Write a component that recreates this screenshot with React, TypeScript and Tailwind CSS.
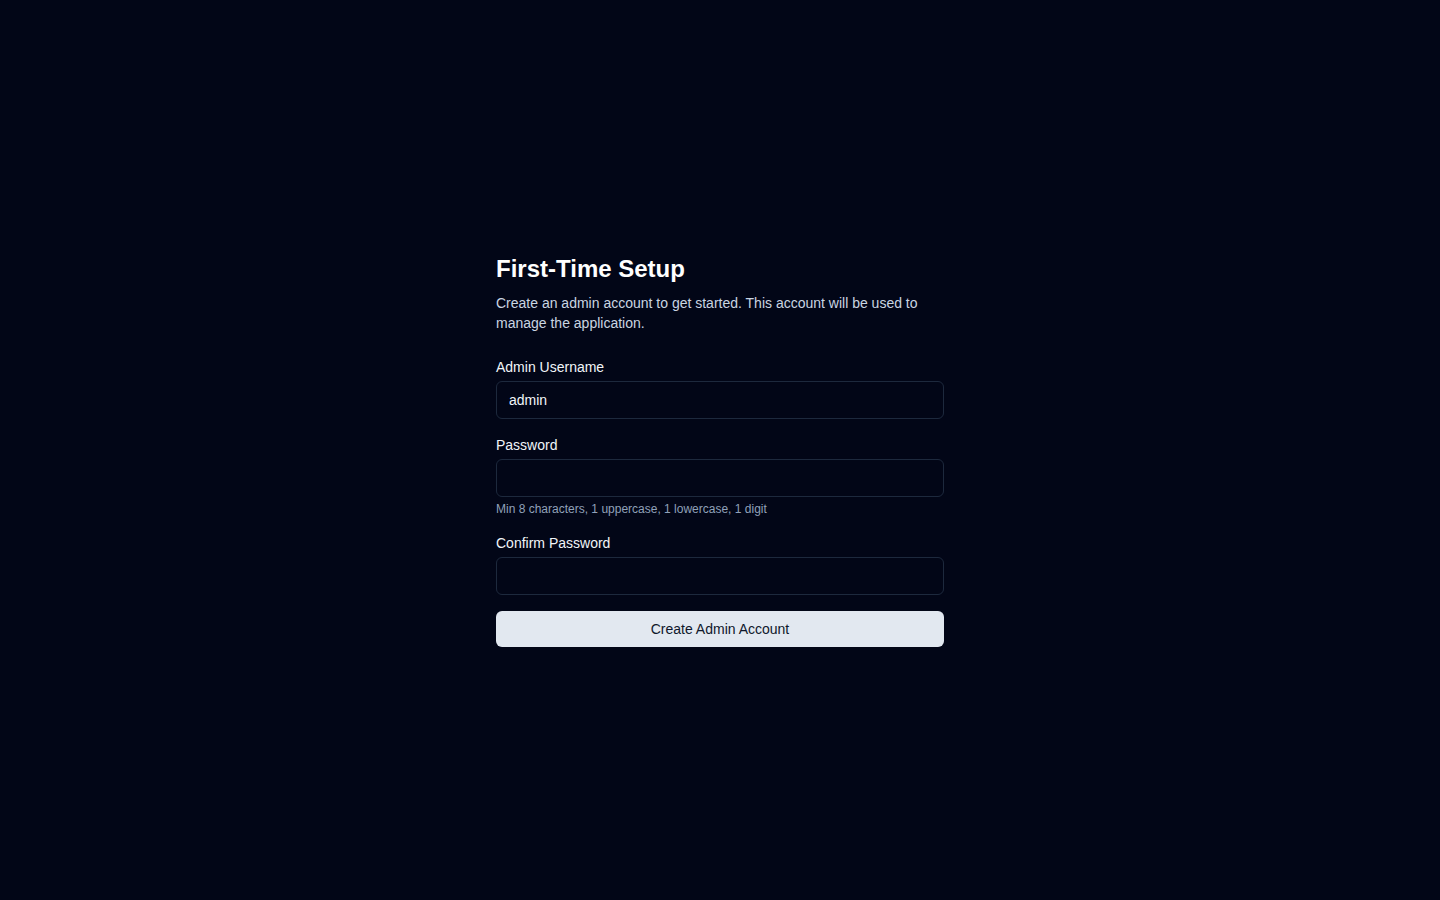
export default function App() {
  return (
    <div
      className="min-h-screen w-full bg-[#020617] flex items-center justify-center text-slate-100"
      style={{ fontFamily: '"Liberation Sans", Arial, sans-serif' }}
    >
      <div className="w-full max-w-md">
        <h1 className="text-2xl font-bold text-white">First-Time Setup</h1>
        <p className="mt-2 text-sm text-slate-300">
          Create an admin account to get started. This account will be used to manage the
          application.
        </p>

        <form className="mt-6 space-y-4" onSubmit={(e) => e.preventDefault()}>
          <div>
            <label className="block mb-1 text-sm text-slate-100">Admin Username</label>
            <input
              type="text"
              defaultValue="admin"
              className="w-full rounded-md border border-slate-800 bg-transparent px-3 py-2 text-sm text-slate-100 outline-none"
            />
          </div>
          <div>
            <label className="block mb-1 text-sm text-slate-100">Password</label>
            <input
              type="password"
              className="w-full rounded-md border border-slate-800 bg-transparent px-3 py-2 text-sm text-slate-100 outline-none"
            />
            <p className="mt-1 text-xs text-slate-400">
              Min 8 characters, 1 uppercase, 1 lowercase, 1 digit
            </p>
          </div>
          <div>
            <label className="block mb-1 text-sm text-slate-100">Confirm Password</label>
            <input
              type="password"
              className="w-full rounded-md border border-slate-800 bg-transparent px-3 py-2 text-sm text-slate-100 outline-none"
            />
          </div>
          <button
            type="submit"
            className="w-full rounded-md bg-slate-200 py-2 text-sm text-slate-900"
          >
            Create Admin Account
          </button>
        </form>
      </div>
    </div>
  );
}
